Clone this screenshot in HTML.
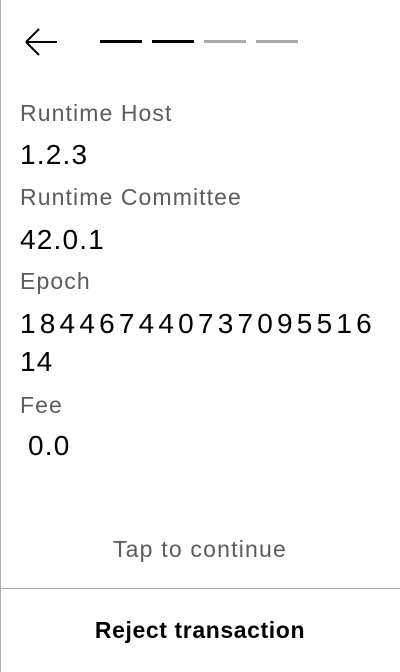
<!DOCTYPE html>
<html><head><style>
body{margin:0;width:400px;height:672px;background:#fff;position:relative;overflow:hidden;font-family:"Liberation Sans",sans-serif}
.l{position:absolute;left:0;top:0;width:1px;height:672px;background:#aaa}
.d{position:absolute;top:40px;height:3px;width:42px}
.t{position:absolute;left:20px;white-space:nowrap;line-height:1}
.lab{font-size:23px;color:#5c5c5c;letter-spacing:1.1px}
.val{font-size:28px;color:#000;letter-spacing:1.2px}
</style></head><body>
<div class="l"></div>
<svg style="position:absolute;left:22px;top:27px" width="38" height="32" viewBox="0 0 38 32"><path d="M4 15H35M4 15L17 2M4 15L17 28" stroke="#000" stroke-width="2" fill="none"/></svg>
<div class="d" style="left:100px;background:#000"></div>
<div class="d" style="left:152px;background:#000"></div>
<div class="d" style="left:204px;background:#aaa"></div>
<div class="d" style="left:256px;background:#aaa"></div>
<div class="t lab" style="top:102px">Runtime Host</div>
<div class="t val" style="top:141px">1.2.3</div>
<div class="t lab" style="top:186px">Runtime Committee</div>
<div class="t val" style="top:226px">42.0.1</div>
<div class="t lab" style="top:270px">Epoch</div>
<div class="t val" style="top:310px;letter-spacing:4.2px">184467440737095516</div>
<div class="t val" style="top:348px">14</div>
<div class="t lab" style="top:394px">Fee</div>
<div class="t val" style="top:432px;left:28px">0.0</div>
<div class="t lab" style="top:538px;left:0;width:400px;text-align:center;letter-spacing:1.2px">Tap to continue</div>
<div style="position:absolute;left:0;top:588px;width:400px;height:1px;background:#aaa"></div>
<div class="t" style="top:619px;left:0;width:400px;text-align:center;font-size:23px;font-weight:bold;color:#000;letter-spacing:0.6px">Reject transaction</div>
</body></html>
